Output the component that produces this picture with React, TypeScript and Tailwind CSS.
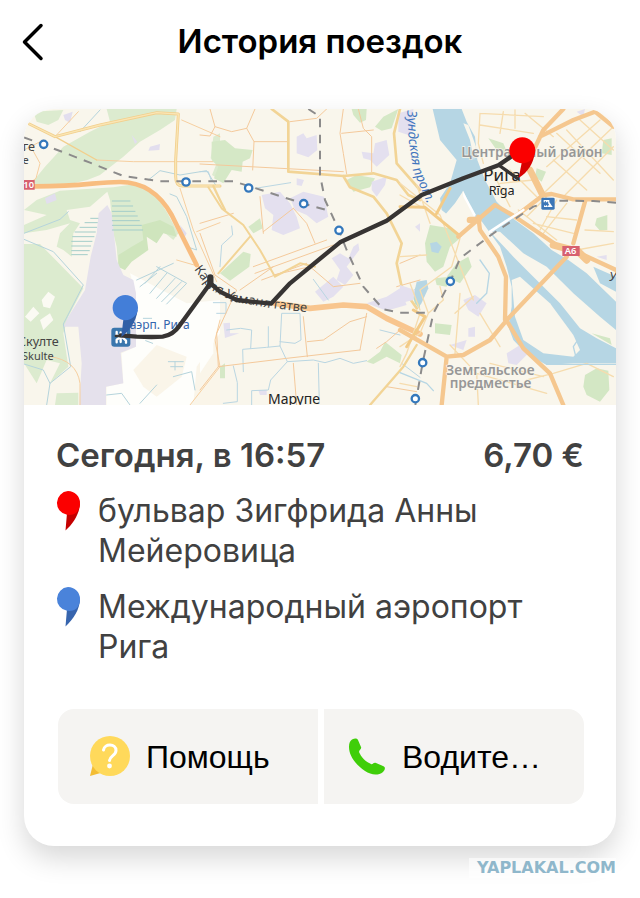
import React from "react";

type PinProps = { color: string; shade: string };

const STOPS = [
  { name: "бульвар Зигфрида Анны Мейеровица", color: "#fb0000", shade: "#c40000" },
  { name: "Международный аэропорт Рига", color: "#4a83da", shade: "#3765ae" },
];

const STATIONS = [
  [131, 133], [558, 246], [746, 264], [911, 311], [1017, 391],
  [1351, 544], [1268, 788], [1246, 896],
];

function Pin({ color, shade }: PinProps) {
  return (
    <svg viewBox="0 0 24 40" className="w-6 h-10 shrink-0" aria-hidden="true">
      <path d="M24 12C24 22 17 33 9.500 39.500L11 22L20 17Z" fill={shade} />
      <path d="M12 0A12 12 0 0 1 24 12C24 17 22 19.500 20.500 21.500C17 24.500 13 24 11 23.800A12 12 0 0 1 12 0Z" fill={color} />
    </svg>
  );
}

function RouteMap() {
  return (
    <svg
      viewBox="72 27 1776 888"
      className="block w-full h-auto"
      role="img"
      aria-label="Маршрут поездки"
      fill="none"
      strokeLinecap="round"
      strokeLinejoin="round"
    >
      <rect x="72" y="27" width="1776" height="888" fill="#f9f6ec" />

      {/* airport side */}
      <g>
        <g fill="#dcebcf">
          <path d="M100 35L190 30L175 60L145 75L110 65Z" />
          <path d="M85 262L135 200L190 140L270 95L330 65L320 27H530L525 60L480 90L420 125L370 170L300 225L262 240L170 262Z" />
          <path d="M72 330L110 300L180 272L340 262L420 250L470 290L500 335L535 400L520 420L490 395L470 425L440 405L430 460L390 480L375 510L355 500L350 440L340 400L330 300L322 275L270 320L200 330L210 360L240 370L220 400L215 470L190 450L170 440L180 400L210 370L140 390L72 400V375L140 345Z" />
          <path d="M72 432L120 432L250 565L205 650L190 700L205 800L150 850L180 790L140 780L110 850L72 790Z" />
          <path d="M170 880L235 878V915H165Z" />
          <path d="M640 110L660 100V240L636 225L650 190L632 175Z" />
        </g>
        <path d="M355 465L395 440L430 420L425 375L480 360L520 380L530 410L490 400L470 430L440 410L445 450L395 485L375 510L355 500Z" fill="#cfe5bd" />
        <g fill="#fbfaf3">
          <path d="M75 650L100 620L118 640L92 665ZM125 600L145 575L165 590L150 625L130 620ZM120 660L150 640L160 660L130 690Z" />
          <path d="M390 520L560 610L660 600V790L570 915H320V860L370 850L365 760L408 740V580Z" fill="#fefefb" />
          <path d="M400 810L470 735L560 770L545 830L470 890L430 860Z" fill="#faf5e9" />
          <path d="M590 800L660 700V915H580Z" fill="#faf5e9" />
        </g>
        <path d="M322 315L335 340L345 430L350 480L370 525L400 540L408 580V740L362 758L370 850L318 860V915H238L245 790L235 680L190 680L205 650L255 570L272 470L290 400L296 340Z" fill="#e5e1ec" />
        <g fill="#e2deee">
          <path d="M190 45L218 35L210 68L195 60ZM395 105L412 125L405 132ZM450 140L480 132L478 150L445 152ZM135 295L165 280L170 300L140 312ZM540 375L560 400L550 420Z" />
        </g>
        <g stroke="#a3cdc9" strokeWidth="3">
          <path d="M337 303H390M337 318H398M337 334H405M337 348H412M337 362H418M337 376H424M337 390H428M272 355H294M255 368H292M240 382H290M225 396H286M218 410H282M215 424H276M215 438H272M215 452H268M215 464H262" />
        </g>
        <g stroke="#b5d4dc" strokeWidth="3">
          <path d="M470 500L560 550L500 612M480 500L435 550M470 520L420 560M500 520L450 580M525 535L470 595M545 545L485 605M410 540L520 490" />
          <path d="M72 400L180 358L205 335M72 418L160 455L250 555L190 672L212 800L150 850L130 810L72 792M150 850L140 915M240 95L300 30M445 240L480 212L540 225L620 212L650 260M510 282L530 290L560 350L590 450L560 440M430 655H455M520 830L575 815L585 870M505 785H550M512 800H548M525 785V810M320 885L365 880L390 915M420 910L470 855M437 722L458 730" />
        </g>
        <g stroke="#f6cfa0" strokeWidth="3">
          <path d="M72 150L130 120M98 150L120 190L108 235L72 262M290 180L400 185H640M165 110L235 35M545 60L660 110M540 265L580 390L650 545M590 395L660 368M150 770Q230 780 240 850V915M570 915L660 800L645 720L660 660M530 480L600 500" />
        </g>
        <g stroke="#f2cf8c" strokeWidth="9">
          <path d="M88 72L165 110L300 75L470 38L535 42L527 180V230Q527 258 548 258H660" />
          <path d="M165 110L290 180" strokeWidth="4" />
        </g>
        <path d="M88 72L165 110L300 75L470 38L535 42L527 180V230Q527 258 548 258H660" stroke="#fae5b4" strokeWidth="4" />
        <path d="M105 259C260 259 280 246 360 246C445 246 490 300 515 345L590 495" stroke="#f8bd80" strokeWidth="14" />
      </g>

      {/* central districts */}
      <g transform="translate(600 0)">
        <g fill="#d5e8c6">
          <path d="M35 125L75 120L105 145L158 150L150 175L128 185L125 215L95 210L70 250L42 235L55 200L35 180Z" />
          <path d="M455 27H500L498 60L480 68L460 45ZM550 50L595 27L575 85L545 92L525 80Z" />
          <path d="M440 240L470 225L525 235L510 262L460 275ZM60 520L130 455L152 462L148 500L90 542ZM145 380L180 355L188 385L160 400ZM500 785L540 755L555 725L605 765L600 790L560 770L520 792ZM60 800L75 790V835H60Z" />
          <path d="M635 580L660 545V630L645 610Z" fill="#b9dccd" />
        </g>
        <g fill="#e4e0ef">
          <path d="M290 110L310 100L320 115L350 105L352 150L325 172L290 160ZM485 155L520 160L525 130L560 120L568 165L530 200L510 180L490 175ZM595 40L640 27V85L625 105L595 95Z" />
          <path d="M185 285L240 275L270 310L290 350L300 385L250 405L215 390L220 345L195 325ZM270 295L310 275L372 290L385 350L350 370L320 345L285 330ZM290 235L312 240L305 258L290 255ZM515 245L560 230L555 255L530 290L515 270Z" />
          <path d="M395 475L420 460L445 475L460 440L475 430L478 450L440 500L460 525L435 555L410 540L420 510ZM345 575L400 530L430 560L400 590L370 605ZM500 610L560 590L600 565L620 615L560 632ZM70 670L90 668V700L118 700L75 714ZM175 870H200V885H180ZM645 380L660 370V395Z" />
        </g>
        <path d="M0 610H40V760L0 820Z" fill="#fefefb" />
        <g stroke="#bad6e2" strokeWidth="3">
          <path d="M0 215H25L35 245M165 265L272 248M95 378L98 405L65 435L60 500M40 608H78V640H50M80 690L122 685L155 690L152 745M130 815L128 748L200 742L240 738L245 640H300L303 720L285 730L240 725M240 738L262 785L340 780L375 788L420 775L460 790L500 782M205 680V740M262 785L212 840L205 870L155 872V915M100 798L112 848V905L70 910M355 790L358 910M340 538L385 600M605 790L660 832M540 690L600 705" />
        </g>
        <g stroke="#f4c99b" strokeWidth="3">
          <path d="M0 105L30 108L45 80L30 27M45 80L95 95L140 85L165 27M140 85L162 125H260M162 125L158 210M0 192L430 215M430 27L420 100L430 160L440 222M425 100L520 90M475 27L490 85L515 110V215M270 65L350 55L380 27M0 370L100 340M180 290L190 400M280 325L320 370L345 430M190 395L280 325M160 500L380 420M165 520L400 435M185 540L320 490M120 570L220 500M220 525L330 500L400 560L480 550M0 400L45 525L110 570L50 700L55 800L0 870M55 800L260 775L480 750M310 650L322 770M280 790L290 915M480 750L500 640M322 725L370 720L450 665L500 650M530 745L560 725L600 690M600 490L660 465M590 560L660 540M560 860L650 875" />
        </g>
        <g stroke="#f2d496" strokeWidth="8">
          <path d="M215 27L265 65V215L430 228L520 220L590 240L625 285L660 300M600 27L582 100L590 190L660 270M430 228L450 262L520 290L560 340L605 430L590 490L605 560L650 625" />
          <path d="M25 262L65 325L130 375L180 450L225 530M55 520L150 410M225 530L300 490L345 500" strokeWidth="6" />
          <path d="M40 258L60 300L75 330M650 735L610 800L510 915" strokeWidth="7" />
        </g>
        <path d="M225 610L330 625L430 615L500 620L560 655L660 702" stroke="#f8c58e" strokeWidth="17" />
      </g>

      {/* river and old town */}
      <g transform="translate(1200 0)">
        <g fill="#b6d6e4">
          <path d="M98 27H185L200 65L225 110L232 180L255 240L290 305L345 360L400 400L455 450L505 480L560 520L648 605V790H520L440 795L380 762L340 720L325 680L335 620V560L320 500L300 440L260 385L235 350L200 350L175 330L150 350L125 330L120 295L150 250L170 180L120 120Z" />
          <path d="M50 545L80 540L85 565L62 615L40 590Z" />
          <path d="M580 500L648 530V575L600 550Z" />
          <path d="M340 685L378 708L375 715L345 700Z" />
        </g>
        <g fill="#f9f6ec">
          <path d="M190 70L205 75L228 140L222 180L210 120Z" />
          <path d="M165 310L190 272L225 350L175 405L130 350Z" />
          <path d="M188 272L228 345L222 350L190 290Z" fill="#fff" />
          <path d="M270 395L300 395L370 460L440 500L520 580L600 650L648 690V745L590 715L540 685L480 610L400 530L340 470Z" />
          <path d="M335 540L360 530L450 610L520 705L540 750L520 770L430 760L370 720L345 650Z" />
        </g>
        <g fill="#d3e7c4">
          <path d="M90 375L150 385L180 415L150 440L130 500L105 515L80 485L75 430ZM170 490L205 470L215 500L180 550L140 530ZM105 670L155 675L150 705L105 700Z" />
          <path d="M265 115L310 130L325 165L290 150ZM410 205L438 215L425 245L405 230ZM590 355L622 345V390L600 392L585 375ZM555 825L590 805L625 812L628 870L600 905L560 885L550 860ZM575 700L630 715L635 735ZM610 120L635 115V165L605 160ZM105 535L150 530L140 560L110 555Z" />
        </g>
        <path d="M90 430L110 425L125 440L115 460L95 455Z" fill="#b6d6e4" />
        <path d="M190 600L225 585L260 610L235 650L205 630ZM320 760L360 735L385 760L350 795L325 790ZM205 685L225 680V710H205ZM150 735L200 720L190 750ZM0 555L45 570L40 600L0 610ZM530 35L555 27L550 50ZM590 470L620 465V480Z" fill="#e4e0ef" />
        <g stroke="#f6dcae" strokeWidth="4">
          <path d="M240 40L235 130L250 190M310 35L300 100M240 40L430 50M240 75L400 100M345 30V85M375 40L460 110M470 100L600 220M500 90L640 240M540 60L640 150M640 80L420 290M600 60L440 200M640 140L490 290M460 180L560 270M270 200L330 320M300 250L400 240M330 210L410 290M355 330L470 420M380 350L440 290M420 390L470 300M430 400L500 310M440 350L530 360M400 370L520 400" />
          <path d="M0 470L80 465M0 250L120 345M0 285L80 330M50 255L90 370M180 415L155 500L60 570L85 640L130 600L120 560M30 550L60 630M60 640L20 760L0 800M85 640L60 700L0 740M180 580L165 760M240 640L300 740M165 640L220 590M150 735L230 820L235 915M270 790L430 830M380 840L460 820L560 790L640 830M555 390L640 395M530 450L640 430M230 820L440 880M120 345L220 600M0 850L50 860" />
        </g>
        <path d="M0 320L75 322L180 408M150 265L110 340M40 630L75 650L20 740" stroke="#f3cb87" strokeWidth="9" />
        <path d="M240 480L268 520L260 580L230 610M0 818L80 850L100 872M540 710L520 740L530 780M440 793H648" stroke="#b6d6e4" strokeWidth="4" />
        <g stroke="#f5c78f" strokeWidth="13">
          <path d="M175 410L285 315L345 350L470 435L540 460L648 510M345 350L430 285L455 282L520 298H648M430 285L380 195L430 90L490 27M420 110L520 60L585 35L640 80M555 305L520 430M235 350L240 390L295 470L318 530L315 660M500 470L325 655L270 720L190 765L140 770L0 690M140 770L125 915M325 670L370 745L450 820L490 915" />
          <path d="M210 360H235M390 210L425 280" strokeWidth="20" />
          <path d="M460 435L535 455L560 480" strokeWidth="22" />
        </g>
        <path d="M270 395L370 330" stroke="#fff" strokeWidth="8" />
      </g>

      <g stroke="#8c8b8b" strokeWidth="6" strokeDasharray="26 22" strokeLinecap="butt">
        <path d="M72 112L180 153L270 188L370 228L480 244H700L746 258L911 311L980 330M925 27L960 50V225L975 300L1017 391L1040 450L1090 560L1150 628L1200 638H1290" />
        <path d="M1848 308L1780 303L1660 302L1600 320L1480 400L1380 475L1351 544L1300 640L1268 788L1246 915" />
      </g>
      {STATIONS.map(([x, y]) => (
        <circle key={x} cx={x} cy={y} r="11" fill="#fff" stroke="#3478bc" strokeWidth="7" />
      ))}

      {/* road shields */}
      <path d="M72 240H104V269H72Z" fill="#d7606f" />
      <path d="M1687 438H1739V468H1687Z" fill="#d7606f" />
      <g fill="#fff" fontSize="28" fontWeight="600" className="font-['Noto_Sans',sans-serif]">
        <text x="70" y="265">10</text>
        <text x="1694" y="463">A6</text>
      </g>

      <g fill="#444" className="font-['Noto_Sans',sans-serif]">
        <g fontSize="38">
          <text x="68" y="154">ге</text>
          <text x="68" y="191" fontSize="32">е</text>
          <text x="54" y="739">Скулте</text>
          <text x="66" y="779" fontSize="33">Skulte</text>
          <text x="1828" y="542" fontStyle="italic">У</text>
        </g>
        <text x="804" y="912" fontSize="42" fill="#222">Марупе</text>
        <g fontSize="41" fontWeight="600" fill="#979797" stroke="#f9f6ec" strokeWidth="4" paintOrder="stroke">
          <text x="1384" y="170">Центральный район</text>
          <text x="1339" y="826">Земгальское</text>
          <text x="1349" y="864">предместье</text>
        </g>
        <text x="1450" y="243" fontSize="51" fill="#222">Рига</text>
        <text x="1466" y="286" fontSize="38" fill="#222">Rīga</text>
        <text x="372" y="686" fontSize="36" fill="#3465ad">Гаэрп. Рига</text>
        <path id="sound" d="M1222 32L1226 120L1240 215L1290 330" fill="none" />
        <text fontSize="40" fontStyle="italic" fill="#4275bd">
          <textPath href="#sound">Зундская прот.</textPath>
        </text>
        <path id="ulmana" d="M582 508L626 566L700 605L800 622L900 634L980 644" fill="none" />
        <text fontSize="39">
          <textPath href="#ulmana">Карля Улманя гатве</textPath>
        </text>
      </g>

      <g>
        <rect x="1624" y="293" width="40" height="36" rx="4" fill="#3b76b7" />
        <path d="M1631 300H1648V306L1658 321H1632V316H1648L1642 307H1631Z" fill="#fff" />
        <path d="M1636 304V317M1643 306V318" stroke="#3b76b7" strokeWidth="3" />
      </g>
      <g>
        <rect x="334" y="683" width="57" height="57" rx="9" fill="#3a76ad" />
        <path d="M350 696V704L356 708M350 727V719L356 715M377 696V704L369 709V714L378 722V728M362 697V726" stroke="#fff" strokeWidth="7" />
      </g>

      <g stroke="#373433" strokeWidth="13">
        <path d="M362 706L410 710Q460 712 488 710Q520 705 540 675L631 550L660 575L710 600L813 611L870 550L1020 427L1160 362L1265 285L1390 235L1495 196L1545 162" />
        <path d="M631 532V552" strokeWidth="19" />
        <path d="M1500 198L1552 235" strokeWidth="10" />
        <path d="M348 708H374" strokeWidth="8" />
      </g>
      <path d="M371 650L413 630C408 665 390 692 364 711Z" fill="#315fa6" />
      <circle cx="376" cy="623" r="38" fill="#437ed8" />
      <path d="M1566 184L1604 160C1600 190 1585 216 1556 234Z" fill="#d80000" />
      <circle cx="1567" cy="151" r="39" fill="#fb0000" />
    </svg>
  );
}

function HelpIcon() {
  return (
    <svg viewBox="0 0 40 41" className="w-10 h-[41px] shrink-0" aria-hidden="true">
      <path d="M3 28L0 40L14 36Z" fill="#f3bd34" />
      <circle cx="20" cy="20" r="20" fill="#ffd95b" />
      <path d="M13.500 14C14.500 7 26 7.500 26 14.500C26 19.500 20 19.500 19.500 24.500" fill="none" stroke="#fff" strokeWidth="3" strokeLinecap="round" />
      <circle cx="19.500" cy="30" r="2.400" fill="#fff" />
    </svg>
  );
}

function PhoneIcon() {
  return (
    <svg viewBox="0 0 38 38" className="w-[38px] h-[38px] shrink-0" aria-hidden="true">
      <path
        d="M4 1.500C7 0 9 0 10 2L13 9C14 11 11 12 11 14C13 19 18 24 23 26C25 27 25 24 28 25L35 28C38 29 37 32 35 34C30 38 23 37 17 33C8 27 1 18 1 9C1 5 2 3 4 1.500Z"
        fill="#3fce09"
      />
    </svg>
  );
}

export default function App() {
  return (
    <div className="min-h-screen bg-white font-['Inter',sans-serif] text-[#414141]">
      <header className="relative flex h-[84px] items-center justify-center text-black">
        <button type="button" aria-label="Назад" className="absolute left-5 p-0.5">
          <svg viewBox="0 0 22 38" className="w-[22px] h-[38px]" fill="none" stroke="currentColor" strokeWidth="3.500" strokeLinecap="round" strokeLinejoin="round">
            <path d="M19 2.500L2.500 19L19 35.500" />
          </svg>
        </button>
        <h1 className="text-[33px] font-semibold">История поездок</h1>
      </header>

      <main className="px-6 pt-[25px]">
        <article className="rounded-[30px] bg-white shadow-[0_12px_28px_rgba(0,0,0,0.16)]">
          <div className="overflow-hidden rounded-t-[30px]">
            <RouteMap />
          </div>

          <div className="px-8 pt-7 pb-[42px]">
            <div className="flex items-center justify-between text-[33px] leading-[44px] font-semibold">
              <h2>Сегодня, в 16:57</h2>
              <p>6,70 €</p>
            </div>

            <ul className="mt-3.5 space-y-4">
              {STOPS.map((stop) => (
                <li key={stop.name} className="flex items-start gap-[18px]">
                  <Pin color={stop.color} shade={stop.shade} />
                  <span className="text-[32px] leading-[40px]">{stop.name}</span>
                </li>
              ))}
            </ul>

            <div className="ml-0.5 mt-[42px] grid grid-cols-2 gap-1.5 font-['Liberation_Sans',Arial,sans-serif] text-[32px] text-black">
              <button type="button" className="flex h-[95px] items-center gap-4 rounded-l-2xl bg-[#f5f4f2] pl-8">
                <HelpIcon />
                <span>Помощь</span>
              </button>
              <button type="button" className="flex h-[95px] items-center gap-4 rounded-r-2xl bg-[#f5f4f2] pl-6">
                <PhoneIcon />
                <span>Водите…</span>
              </button>
            </div>
          </div>
        </article>

        <footer className="relative mt-3 flex justify-end">
          <a href="#" className="bg-white/60 pl-2 font-['DejaVu_Sans',sans-serif] text-[16px] leading-5 font-bold text-[#8fb7cb]">
            YAPLAKAL.COM
          </a>
        </footer>
      </main>
    </div>
  );
}
